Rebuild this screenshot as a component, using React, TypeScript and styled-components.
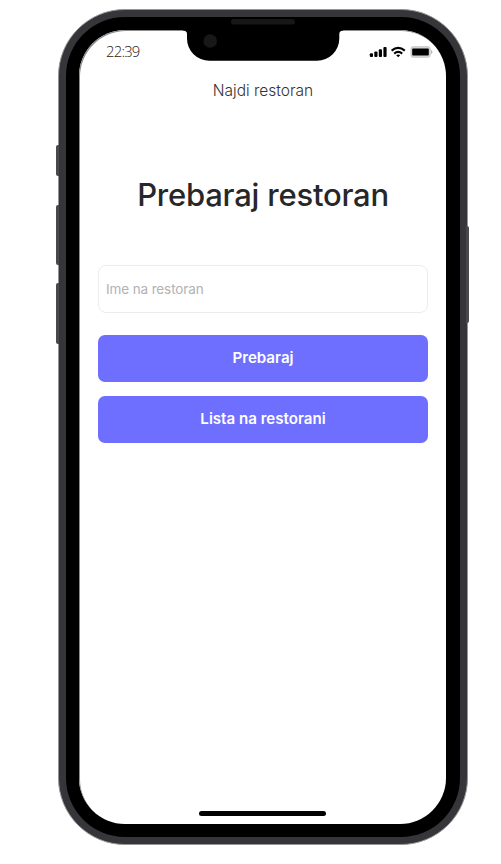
import React from "react";
import styled, { createGlobalStyle } from "styled-components";

const GlobalStyle = createGlobalStyle`
  * { box-sizing: border-box; }
  body { margin: 0; background: #fff; font-family: Inter, sans-serif; }
`;

const Page = styled.main`
  height: 864px;
  padding: 9px 0 0 58px;
  overflow: hidden;
`;

const Frame = styled.div`
  position: relative;
  width: 410px;
  height: 836px;
  padding: 7px;
  border: 1px solid #96969a;
  border-radius: 67px;
  background: #36353a;
`;

const Bezel = styled.div`
  position: relative;
  width: 394px;
  height: 820px;
  padding: 13px 14px 13px 13px;
  border-radius: 59px;
  background: #000;
`;

const SideKey = styled.i<{ $side: "left" | "right"; $top: number; $height: number }>`
  position: absolute;
  ${(p) => p.$side}: ${(p) => (p.$side === "left" ? -3 : -2)}px;
  top: ${(p) => p.$top}px;
  width: 3px;
  height: ${(p) => p.$height}px;
  background: #49484c;
  border-radius: ${(p) => (p.$side === "left" ? "2px 0 0 2px" : "0 2px 2px 0")};
`;

const Screen = styled.section`
  display: flex;
  flex-direction: column;
  align-items: center;
  width: 367px;
  height: 794px;
  padding-left: 1px;
  border-radius: 46px;
  background: #fff;
  box-shadow: inset 1px 1px 0 #8c8c8c;
`;

const Notch = styled.svg`
  position: absolute;
  left: 115px;
  top: 0;
`;

const StatusBar = styled.header`
  display: flex;
  justify-content: space-between;
  width: 100%;
  height: 42px;
  padding: 11px 13px 0 26px;
`;

const Time = styled.time`
  font: 300 14.8px/20px "Open Sans", sans-serif;
  letter-spacing: -0.75px;
  color: #1c1c1c;
`;

const StatusIcons = styled.svg`
  margin-top: 3px;
`;

const ScreenTitle = styled.div`
  height: 24px;
  margin-top: 7px;
  font-size: 15.5px;
  font-weight: 300;
  line-height: 24px;
  color: #333;
`;

const Heading = styled.h1`
  margin: 72px 0 0;
  height: 40px;
  font-size: 31px;
  font-weight: 500;
  line-height: 40px;
  letter-spacing: -0.22px;
  color: #27272a;
  white-space: nowrap;
`;

const Form = styled.form`
  display: flex;
  flex-direction: column;
  width: 330px;
  margin-top: 50px;
`;

const SearchInput = styled.input`
  width: 100%;
  height: 48px;
  margin-bottom: 22px;
  padding: 0 7px 1px;
  border: 1px solid #ececed;
  border-radius: 8px;
  background: #fff;
  font: 400 13.5px Inter, sans-serif;
  letter-spacing: -0.12px;
  outline: none;
  &::placeholder { color: #b2b2b4; opacity: 1; }
`;

const Button = styled.button`
  height: 47px;
  margin: 0 0 14px;
  padding: 0 0 2px;
  border: 0;
  border-radius: 7px;
  background: #6e6fff;
  color: #fff;
  font: 600 15.1px Inter, sans-serif;
`;

const HomeIndicator = styled.div`
  width: 127px;
  height: 5px;
  margin: auto 1px 8px 0;
  border-radius: 3px;
  background: #000;
`;

export default function App() {
  return (
    <Page>
      <GlobalStyle />
      <Frame>
        <SideKey $side="left" $top={135} $height={31} />
        <SideKey $side="left" $top={195} $height={60} />
        <SideKey $side="left" $top={273} $height={61} />
        <SideKey $side="right" $top={216} $height={97} />
        <Bezel>
          <Screen>
            <StatusBar>
              <Time>22:39</Time>
              <StatusIcons width="64" height="14" viewBox="369 44 64 14" aria-hidden="true">
                <g fill="#000">
                  <rect x="369.8" y="53.3" width="3.2" height="3.7" rx="1" />
                  <rect x="374.3" y="51.5" width="3.2" height="5.5" rx="1" />
                  <rect x="378.8" y="49.2" width="3.2" height="7.8" rx="1" />
                  <rect x="383.4" y="47" width="3.2" height="10" rx="1" />
                </g>
                <g fill="none" stroke="#000" strokeWidth="2.1">
                  <path d="M391.6 50.6Q398.2 45.2 404.8 50.6" />
                  <path d="M394.2 53.6Q398.2 50.3 402.2 53.6" />
                </g>
                <path d="M396.2 55.3Q398.2 53.7 400.2 55.3L398.2 57.3Z" />
                <rect x="411.1" y="46.8" width="19" height="10.4" rx="1.8" fill="#d8d8d8" stroke="#c4c4c4" strokeWidth="1" />
                <rect x="412.2" y="48.5" width="16.6" height="7" rx="0.8" />
                <path d="M431 49.8Q434 52 431 54.2Z" fill="#bbb" />
              </StatusIcons>
            </StatusBar>
            <ScreenTitle>Najdi restoran</ScreenTitle>
            <Heading>Prebaraj restoran</Heading>
            <Form onSubmit={(e) => e.preventDefault()}>
              <SearchInput placeholder="Ime na restoran" />
              <Button type="submit">Prebaraj</Button>
              <Button type="button">Lista na restorani</Button>
            </Form>
            <HomeIndicator />
          </Screen>
          <Notch width="165" height="46" viewBox="181 17 165 46" aria-hidden="true">
            <path d="M183 28V30.5Q187 30.5 187 34V38.5A22.3 22.3 0 0 0 209.3 60.8H317A22.3 22.3 0 0 0 339.3 38.5V34Q339.3 30.5 343.3 30.5V28Z" />
            <rect x="231" y="19" width="64" height="5.4" rx="2.7" fill="#171717" />
            <circle cx="210.2" cy="41" r="6.8" fill="#181818" />
          </Notch>
        </Bezel>
      </Frame>
    </Page>
  );
}
